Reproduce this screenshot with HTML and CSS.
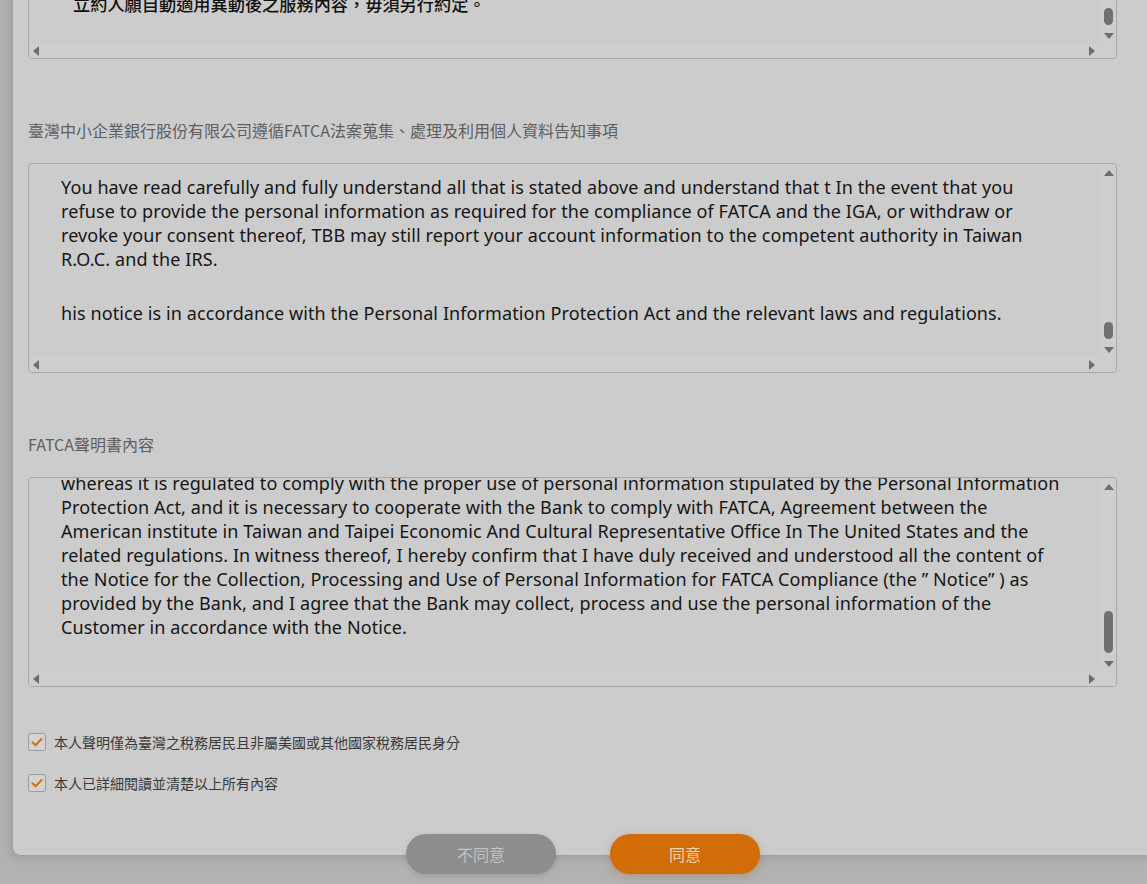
FILE: index.html
```html
<!DOCTYPE html>
<html lang="zh-Hant">
<head>
<meta charset="utf-8">
<title>FATCA</title>
<link rel="stylesheet" href="styles.css">
</head>
<body>
<div class="page">
  <div class="card">
    <div class="doc doc-first">
      <div class="doc-body doc-body-end">
        <p class="zh-line">立約人願自動適用異動後之服務內容，毋須另行約定。</p>
      </div>
      <div class="vbar vbar-first">
        <span class="arrow up hidden"></span>
        <span class="fill"></span>
        <span class="thumb thumb-s"></span>
        <span class="arrow down"></span>
      </div>
      <div class="hbar"><span class="arrow left"></span><span class="fill"></span><span class="arrow right"></span></div>
      <div class="corner"></div>
    </div>

    <h3 class="section-title">臺灣中小企業銀行股份有限公司遵循FATCA法案蒐集、處理及利用個人資料告知事項</h3>
    <div class="doc">
      <div class="doc-body">
        <p>You have read carefully and fully understand all that is stated above and understand that t In the event that you<br>refuse to provide the personal information as required for the compliance of FATCA and the IGA, or withdraw or<br>revoke your consent thereof, TBB may still report your account information to the competent authority in Taiwan<br>R.O.C. and the IRS.</p>
        <p>his notice is in accordance with the Personal Information Protection Act and the relevant laws and regulations.</p>
      </div>
      <div class="vbar">
        <span class="arrow up"></span>
        <span class="fill"></span>
        <span class="thumb thumb-s"></span>
        <span class="arrow down"></span>
      </div>
      <div class="hbar"><span class="arrow left"></span><span class="fill"></span><span class="arrow right"></span></div>
      <div class="corner"></div>
    </div>

    <h3 class="section-title">FATCA聲明書內容</h3>
    <div class="doc">
      <div class="doc-body doc-body-scrolled">
        <p>whereas it is regulated to comply with the proper use of personal information stipulated by the Personal Information<br>Protection Act, and it is necessary to cooperate with the Bank to comply with FATCA, Agreement between the<br>American institute in Taiwan and Taipei Economic And Cultural Representative Office In The United States and the<br>related regulations. In witness thereof, I hereby confirm that I have duly received and understood all the content of<br>the Notice for the Collection, Processing and Use of Personal Information for FATCA Compliance (the ” Notice” ) as<br>provided by the Bank, and I agree that the Bank may collect, process and use the personal information of the<br>Customer in accordance with the Notice.</p>
      </div>
      <div class="vbar">
        <span class="arrow up"></span>
        <span class="fill"></span>
        <span class="thumb thumb-l"></span>
        <span class="arrow down"></span>
      </div>
      <div class="hbar"><span class="arrow left"></span><span class="fill"></span><span class="arrow right"></span></div>
      <div class="corner"></div>
    </div>

    <div class="checks">
      <label class="check">
        <span class="box"><svg viewBox="0 0 18 18" width="18" height="18"><path d="M4.5 9.2 L7.6 12.2 L13.5 6" fill="none" stroke="#d1700f" stroke-width="2" stroke-linecap="round" stroke-linejoin="round"/></svg></span>
        <span class="check-text">本人聲明僅為臺灣之稅務居民且非屬美國或其他國家稅務居民身分</span>
      </label>
      <label class="check">
        <span class="box"><svg viewBox="0 0 18 18" width="18" height="18"><path d="M4.5 9.2 L7.6 12.2 L13.5 6" fill="none" stroke="#d1700f" stroke-width="2" stroke-linecap="round" stroke-linejoin="round"/></svg></span>
        <span class="check-text">本人已詳細閱讀並清楚以上所有內容</span>
      </label>
    </div>
  </div>

  <div class="actions">
    <button class="btn btn-disagree" type="button">不同意</button>
    <button class="btn btn-agree" type="button">同意</button>
  </div>
</div>
</body>
</html>
```

FILE: styles.css
```css
html, body {
  margin: 0;
  padding: 0;
}
body {
  background: #b2b2b2;
  height: 884px;
  overflow: hidden;
  font-family: "Noto Sans", "Noto Sans CJK TC", sans-serif;
}
.page {
  width: 1140px;
  margin-left: 13px;
}
.card {
  background: #cccccc;
  margin-top: -180px;
  padding: 29px 36px 63px 15px;
  border-radius: 0 0 8px 8px;
  box-shadow: -3px 3px 8px rgba(0, 0, 0, 0.12);
}
.doc {
  height: 210px;
  box-sizing: border-box;
  border: 1px solid #a9a9a9;
  border-radius: 4px;
  display: grid;
  grid-template-columns: 1fr 15px;
  grid-template-rows: 1fr 15px;
  overflow: hidden;
}
.doc-body {
  overflow: hidden;
  padding: 11px 0 0 32px;
  color: #161616;
  font-size: 18px;
  letter-spacing: 0.1px;
  line-height: 24px;
  white-space: nowrap;
}
.doc-body p {
  margin: 0 0 30px;
}
.doc-body-end {
  display: flex;
  flex-direction: column;
  justify-content: flex-end;
  padding: 0 0 27px 44px;
}
.doc-body-end p {
  margin: 0;
}
.zh-line {
  font-family: "Noto Sans CJK TC", sans-serif;
  font-weight: 500;
  font-size: 17.2px;
  letter-spacing: 0;
  color: #111;
}
.doc-body-scrolled {
  padding-top: 0;
}
.doc-body-scrolled p {
  margin-top: -7px;
}
.vbar {
  grid-row: 1;
  grid-column: 2;
  background: #cecece;
  display: flex;
  flex-direction: column;
  align-items: center;
  padding: 6px 0 4px;
}
.vbar .fill, .hbar .fill {
  flex: 1;
}
.hbar {
  grid-row: 2;
  grid-column: 1;
  background: #cecece;
  display: flex;
  align-items: center;
  padding: 0 6px 0 4px;
}
.corner {
  grid-row: 2;
  grid-column: 2;
  background: #cecece;
}
.arrow {
  width: 0;
  height: 0;
  display: block;
}
.arrow.up {
  border-left: 5px solid transparent;
  border-right: 5px solid transparent;
  border-bottom: 6px solid #6e6e6e;
}
.arrow.down {
  border-left: 5px solid transparent;
  border-right: 5px solid transparent;
  border-top: 6px solid #6e6e6e;
}
.arrow.left {
  border-top: 5px solid transparent;
  border-bottom: 5px solid transparent;
  border-right: 6px solid #6e6e6e;
}
.arrow.right {
  border-top: 5px solid transparent;
  border-bottom: 5px solid transparent;
  border-left: 6px solid #6e6e6e;
}
.arrow.hidden {
  visibility: hidden;
}
.thumb {
  width: 9px;
  border-radius: 5px;
  background: #707070;
  margin-bottom: 8px;
}
.thumb-s {
  height: 17px;
}
.thumb-l {
  height: 42px;
}
.section-title {
  margin: 61px 0 23px;
  font-family: "Noto Sans CJK TC", sans-serif;
  font-weight: 400;
  font-size: 16px;
  line-height: 20px;
  color: #5e5e5e;
}
.checks {
  margin-top: 46px;
  display: flex;
  flex-direction: column;
  gap: 23px;
}
.check {
  display: flex;
  align-items: center;
  gap: 8px;
  height: 18px;
}
.box {
  width: 18px;
  height: 18px;
  box-sizing: border-box;
  border: 1px solid #9c9c9c;
  border-radius: 3px;
  background: #d3d3d3;
  display: flex;
  align-items: center;
  justify-content: center;
}
.box svg {
  display: block;
  margin: -1px;
}
.check-text {
  font-family: "Noto Sans CJK TC", sans-serif;
  font-size: 14px;
  color: #3a3a3a;
}
.actions {
  display: flex;
  justify-content: center;
  gap: 54px;
  margin-top: -21px;
}
.btn {
  width: 150px;
  height: 40px;
  border: none;
  border-radius: 20px;
  font-family: "Noto Sans CJK TC", sans-serif;
  font-size: 16px;
  cursor: pointer;
}
.btn-disagree {
  background: #8d8d8d;
  color: #c2c2c2;
  box-shadow: 0 2px 6px rgba(0, 0, 0, 0.12);
}
.btn-agree {
  background: #d26c06;
  color: #f2d3b4;
  box-shadow: 0 2px 8px rgba(160, 80, 0, 0.3);
}
```
